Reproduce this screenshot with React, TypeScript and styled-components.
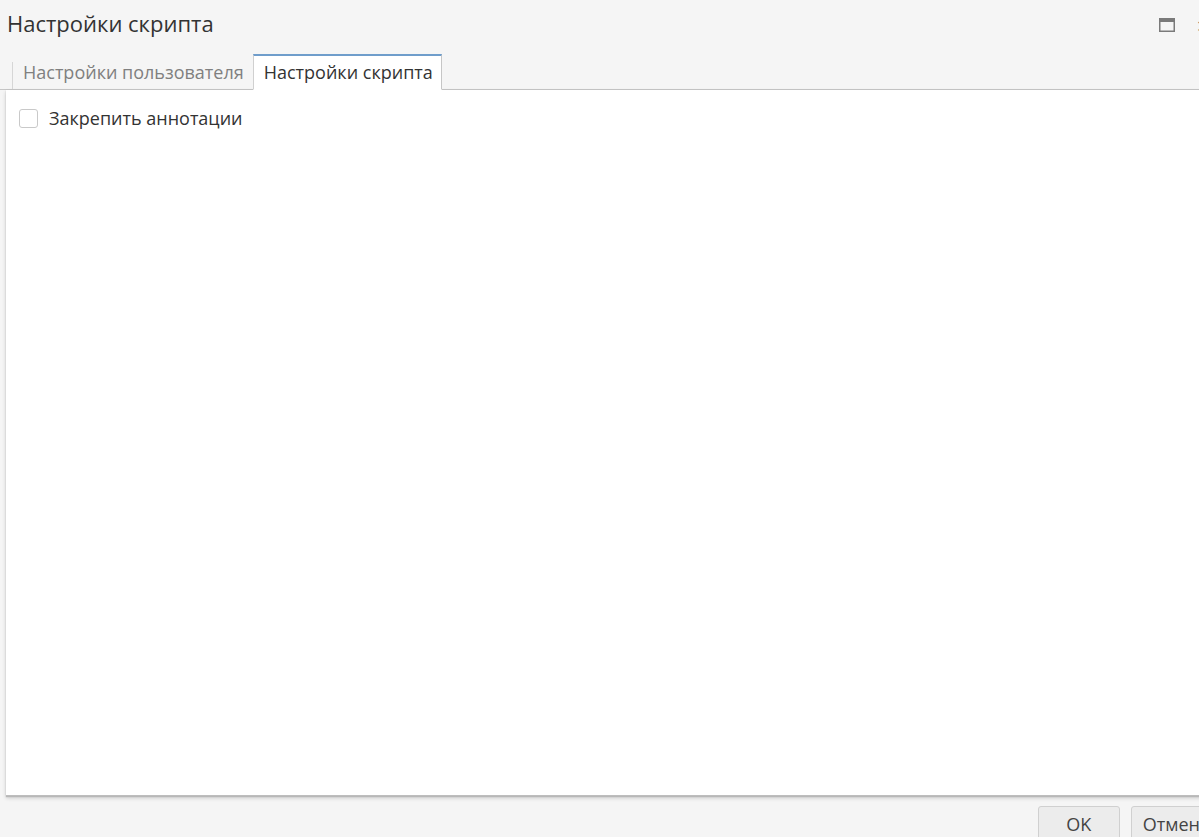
import React from "react";
import styled, { createGlobalStyle } from "styled-components";

const Global = createGlobalStyle`
  html, body { margin: 0; padding: 0; background: #f5f5f5; overflow: hidden; }
  body { font-family: "Open Sans", "Liberation Sans", sans-serif; }
  * { box-sizing: border-box; }
`;

const Window = styled.div`
  width: 1222px;
  height: 837px;
  display: flex;
  flex-direction: column;
  background: #f5f5f5;
  overflow: hidden;
  & > * { flex-shrink: 0; }
`;

const Header = styled.div`
  height: 54px;
  display: flex;
  align-items: flex-start;
  padding: 8px 0 0 7px;
`;

const Title = styled.div`
  flex: 1;
  font-size: 22px;
  line-height: 30px;
  color: #333;
`;

const Tools = styled.div`
  display: flex;
  align-items: center;
  gap: 20px;
  padding-top: 10px;
  padding-right: 11px;
`;

const ToolButton = styled.button`
  border: 0;
  background: none;
  padding: 0;
  width: 16px;
  height: 14px;
  display: flex;
  align-items: center;
  justify-content: center;
  color: #666;
  font-size: 22px;
  line-height: 14px;
  font-family: "Open Sans", sans-serif;
`;

const TabBar = styled.div`
  display: flex;
  align-items: flex-end;
  height: 36px;
  padding-left: 12px;
  border-bottom: 1px solid #c6c6c6;
`;

const Tab = styled.div<{ $active?: boolean }>`
  position: relative;
  height: 36px;
  margin-bottom: -1px;
  padding: 0 8px 0 10px;
  display: flex;
  align-items: ${(p) => (p.$active ? "center" : "flex-end")};
  font-size: 18px;
  color: ${(p) => (p.$active ? "#333" : "#808080")};
  background: ${(p) => (p.$active ? "#fff" : "transparent")};
  border-left: 1px solid ${(p) => (p.$active ? "#d0d0d0" : "transparent")};
  border-right: 1px solid ${(p) => (p.$active ? "#c6c6c6" : "transparent")};
  border-top: 2px solid ${(p) => (p.$active ? "#6f9dcb" : "transparent")};
  border-bottom: 1px solid ${(p) => (p.$active ? "#fff" : "transparent")};
  padding-bottom: ${(p) => (p.$active ? "1px" : "5px")};
`;

const TabDivider = styled.span`
  position: absolute;
  left: -1px;
  top: 6px;
  bottom: 0;
  width: 1px;
  background: #d6d6d6;
`;

const Panel = styled.div`
  height: 706px;
  margin-left: 6px;
  background: #fff;
  box-shadow: 0 1px 1px #b8b8b8, 0 2px 4px rgba(0, 0, 0, 0.18);
  border-bottom: 1px solid #bdbdbd;
  padding: 18px 13px;
`;

const CheckRow = styled.label`
  display: flex;
  align-items: center;
  gap: 11px;
  font-size: 18px;
  color: #333;
  line-height: 20px;
`;

const Box = styled.span`
  width: 19px;
  height: 19px;
  border: 1px solid #c9c9c9;
  border-radius: 3px;
  background: #fff;
  display: inline-block;
`;

const Footer = styled.div`
  display: flex;
  justify-content: flex-end;
  gap: 11px;
  padding-top: 10px;
`;

const Button = styled.button`
  height: 36px;
  min-width: 82px;
  padding: 0 11px;
  border: 1px solid #d0d0d0;
  border-radius: 3px;
  background: #ececec;
  color: #444;
  font-family: "Open Sans", "Liberation Sans", sans-serif;
  font-size: 18px;
  line-height: 1;
`;

export default function App() {
  return (
    <>
      <Global />
      <Window>
        <Header>
          <Title>Настройки скрипта</Title>
          <Tools>
            <ToolButton aria-label="maximize">
              <svg width="16" height="14" viewBox="0 0 16 14">
                <rect x="0.75" y="0.75" width="14.5" height="12.5" fill="none" stroke="#7a7a7a" strokeWidth="1.5" />
                <rect x="0" y="0" width="16" height="4" fill="#7a7a7a" />
              </svg>
            </ToolButton>
            <ToolButton aria-label="close">×</ToolButton>
          </Tools>
        </Header>
        <TabBar>
          <Tab>
            <TabDivider />
            Настройки пользователя
          </Tab>
          <Tab $active>Настройки скрипта</Tab>
        </TabBar>
        <Panel>
          <CheckRow>
            <Box />
            Закрепить аннотации
          </CheckRow>
        </Panel>
        <Footer>
          <Button>OK</Button>
          <Button>Отмена</Button>
        </Footer>
      </Window>
    </>
  );
}
